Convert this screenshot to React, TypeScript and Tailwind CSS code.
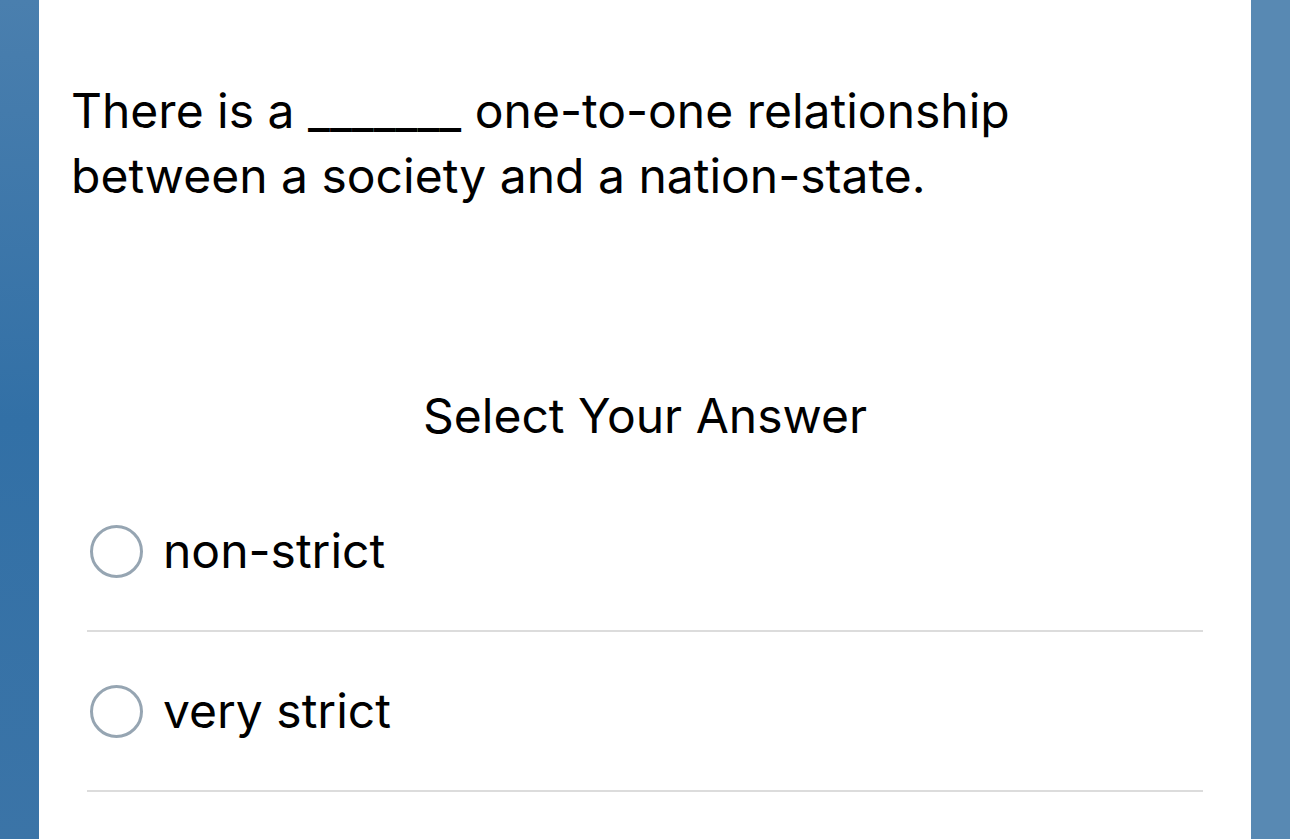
import { useState } from "react";

const options = ["non-strict", "very strict"];

export default function App() {
  const [picked, setPicked] = useState<number | null>(null);

  return (
    <div
      className="w-[1290px] h-[839px] overflow-hidden flex bg-gradient-to-b from-[#4a7fae] via-[#3270a6] to-[#3b74a7]"
      style={{ fontFamily: "Inter, 'Noto Sans', sans-serif" }}
    >
      <div className="w-[39px] shrink-0" />
      <div className="w-[1212px] shrink-0 bg-white flex flex-col">
        <p className="pt-[78px] pl-[32px] pr-[180px] text-[48px] leading-[65px] text-black">
          There is a _______ one-to-one relationship between a society and a nation-state.
        </p>

        <h2 className="mt-[182px] text-center text-[48px] leading-[52px] text-black">
          Select Your Answer
        </h2>

        <div className="mt-[30px] mx-[48px] flex flex-col">
          {options.map((opt, i) => (
            <button
              key={opt}
              onClick={() => setPicked(i)}
              className="h-[160px] flex items-center gap-[20px] border-b-2 border-[#dcdcdc] text-left"
            >
              <span className="w-[53px] h-[53px] ml-[3px] rounded-full border-[3px] border-[#96a5b2] flex items-center justify-center">
                {picked === i && <span className="w-[29px] h-[29px] rounded-full bg-[#3a73a6]" />}
              </span>
              <span className="text-[48px] text-black">{opt}</span>
            </button>
          ))}
        </div>
      </div>
      <div className="flex-1 bg-[#5889b3]" />
    </div>
  );
}
